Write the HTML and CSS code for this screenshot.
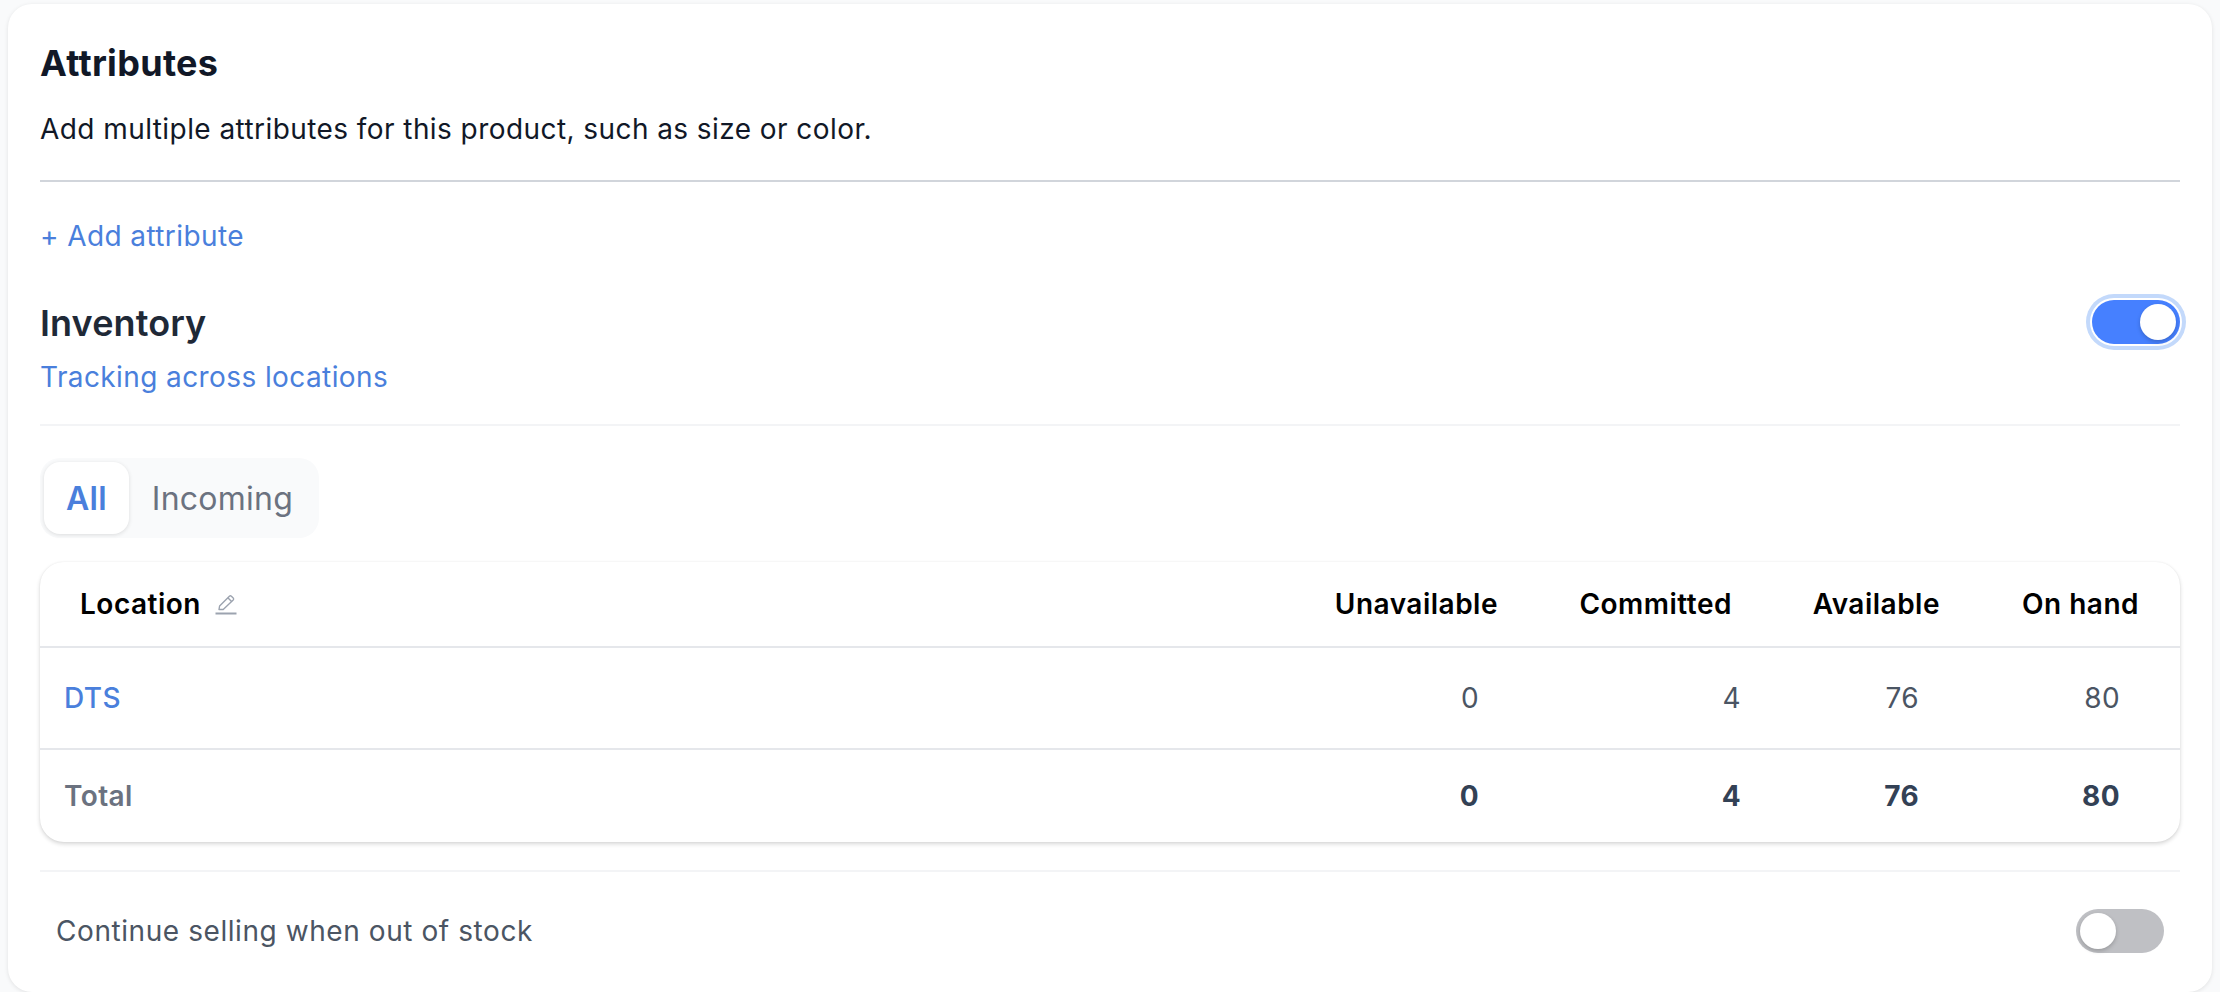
FILE: index.html
```html
<!DOCTYPE html>
<html lang="en">
<head>
<meta charset="utf-8">
<title>Attributes and inventory</title>
<link rel="stylesheet" href="styles.css">
</head>
<body>
<main class="card">
  <section class="attributes">
    <h2 class="title">Attributes</h2>
    <p class="desc">Add multiple attributes for this product, such as size or color.</p>
  </section>
  <a class="add" href="#">+ Add attribute</a>
  <section class="inv-head">
    <div>
      <h2 class="inv-title">Inventory</h2>
      <a class="inv-sub" href="#">Tracking across locations</a>
    </div>
    <span class="toggle on"><span class="knob"></span></span>
  </section>
  <div class="tabs">
    <span class="tab active">All</span>
    <span class="tab">Incoming</span>
  </div>
  <div class="table-wrap">
    <table class="stock">
      <colgroup>
        <col>
        <col class="c1">
        <col class="c2">
        <col class="c3">
        <col class="c4">
      </colgroup>
      <thead>
        <tr>
          <th class="loc">
            <span class="loc-inner">Location
              <svg class="pencil" viewBox="0 0 22 22" fill="none" stroke="#9ca3af" stroke-width="1.4" stroke-linejoin="round"><path d="M4 16.5 4.6 13 14.4 3.2Q15.4 2.2 16.4 3.2L18.2 5Q19.2 6 18.2 7L8.2 16.5Z"/><path d="M12.8 4.8 16.6 8.6"/><path d="M0.5 20.5H21.5" stroke-width="1.8"/></svg>
            </span>
          </th>
          <th>Unavailable</th>
          <th>Committed</th>
          <th class="avail">Available</th>
          <th>On hand</th>
        </tr>
      </thead>
      <tbody>
        <tr class="row">
          <td class="name"><a href="#">DTS</a></td>
          <td class="num">0</td>
          <td class="num narrow">4</td>
          <td class="num">76</td>
          <td class="num">80</td>
        </tr>
        <tr class="total">
          <td class="name">Total</td>
          <td class="num">0</td>
          <td class="num narrow">4</td>
          <td class="num">76</td>
          <td class="num">80</td>
        </tr>
      </tbody>
    </table>
  </div>
  <div class="sell">
    <span class="sell-label">Continue selling when out of stock</span>
    <span class="toggle off"><span class="knob"></span></span>
  </div>
</main>
</body>
</html>
```
FILE: styles.css
```css
* { box-sizing: border-box; }
html, body { height: 100%; }
body {
  margin: 0;
  padding: 4px 8px 0;
  background: #f9fafb;
  font-family: Inter, "Noto Sans", sans-serif;
  letter-spacing: 0.4px;
  overflow: hidden;
}
a { text-decoration: none; }
.card {
  height: 988px;
  background: #fff;
  border-radius: 24px;
  box-shadow: 0 1px 4px rgba(0, 0, 0, 0.1);
  padding: 0 32px;
}
.attributes {
  height: 178px;
  padding-top: 40px;
  border-bottom: 2px solid #d1d5db;
}
.title {
  margin: 0;
  font-size: 36px;
  line-height: 38px;
  font-weight: 700;
  letter-spacing: 0.3px;
  color: #111827;
}
.desc {
  margin: 29px 0 0;
  font-size: 28px;
  line-height: 36px;
  letter-spacing: 0.43px;
  color: #111827;
}
.add {
  display: block;
  margin-top: 36px;
  font-size: 28px;
  line-height: 36px;
  color: #4a7fdc;
}
.inv-head {
  display: flex;
  justify-content: space-between;
  align-items: flex-start;
  height: 172px;
  padding-top: 50px;
  border-bottom: 2px solid #f3f4f6;
}
.inv-title {
  margin: 0;
  font-size: 36px;
  line-height: 38px;
  font-weight: 600;
  letter-spacing: 0.1px;
  color: #1f2937;
}
.inv-sub {
  display: block;
  margin-top: 17px;
  font-size: 28px;
  line-height: 36px;
  color: #4a7fdc;
}
.toggle {
  position: relative;
  display: block;
  width: 88px;
  height: 44px;
  border-radius: 22px;
  flex: none;
}
.toggle.on {
  background: #4680ff;
  box-shadow: 0 0 0 2px #fff, 0 0 0 6px #c3d9fb;
  margin-top: -4px;
}
.toggle.off { background: #bfc0c4; }
.knob {
  position: absolute;
  top: 4px;
  width: 36px;
  height: 36px;
  border-radius: 50%;
  background: #fff;
  box-shadow: 0 2px 4px rgba(0, 0, 0, 0.2);
}
.toggle.on .knob { right: 4px; }
.toggle.off .knob { left: 4px; }
.tabs {
  display: inline-flex;
  align-items: center;
  height: 80px;
  margin-top: 32px;
  padding: 4px 3px 4px 4px;
  background: #f9fafb;
  border-radius: 20px;
  vertical-align: top;
}
.tab {
  display: flex;
  align-items: center;
  justify-content: center;
  height: 72px;
  padding: 0 23px;
  font-size: 32px;
  letter-spacing: 0.25px;
  color: #6b7280;
  border-radius: 16px;
}
.tab.active {
  padding: 0 22px;
  background: #fff;
  color: #4a7fdc;
  font-weight: 600;
  box-shadow: 0 1px 4px rgba(0, 0, 0, 0.12);
}
.table-wrap {
  margin-top: 24px;
  border-radius: 24px;
  background: #fff;
  box-shadow: 0 0 2px rgba(0, 0, 0, 0.06), 0 2px 4px rgba(0, 0, 0, 0.16);
  overflow: hidden;
}
.stock {
  width: 100%;
  border-collapse: collapse;
  table-layout: fixed;
}
.c1 { width: 243px; }
.c2 { width: 234px; }
.c3 { width: 206px; }
.c4 { width: 201px; }
.stock th {
  height: 85px;
  padding: 0 41px 0 0;
  text-align: right;
  font-size: 28px;
  font-weight: 600;
  letter-spacing: 0.5px;
  color: #000;
  border-bottom: 2px solid #e5e7eb;
}
.stock th.loc { text-align: left; padding-left: 40px; }
.stock th.avail { padding-right: 39px; }
.loc-inner { display: inline-flex; align-items: center; gap: 14px; }
.pencil { width: 22px; height: 22px; flex: none; }
.stock td { font-size: 28px; }
.row td { height: 102px; border-bottom: 2px solid #e5e7eb; }
.total td { height: 93px; }
.name { padding-left: 24px; }
.name a { color: #4a7fdc; font-weight: 500; }
.total .name { color: #6b7280; font-weight: 600; }
.num { text-align: right; padding-right: 60px; color: #4b5563; }
.num.narrow { padding-right: 32px; }
.total .num { font-weight: 700; color: #334155; }
.sell {
  display: flex;
  justify-content: space-between;
  align-items: center;
  height: 120px;
  margin-top: 28px;
  padding: 0 16px;
  border-top: 2px solid #f3f4f6;
}
.sell-label { font-size: 28px; letter-spacing: 0.57px; color: #4b5563; }
```
